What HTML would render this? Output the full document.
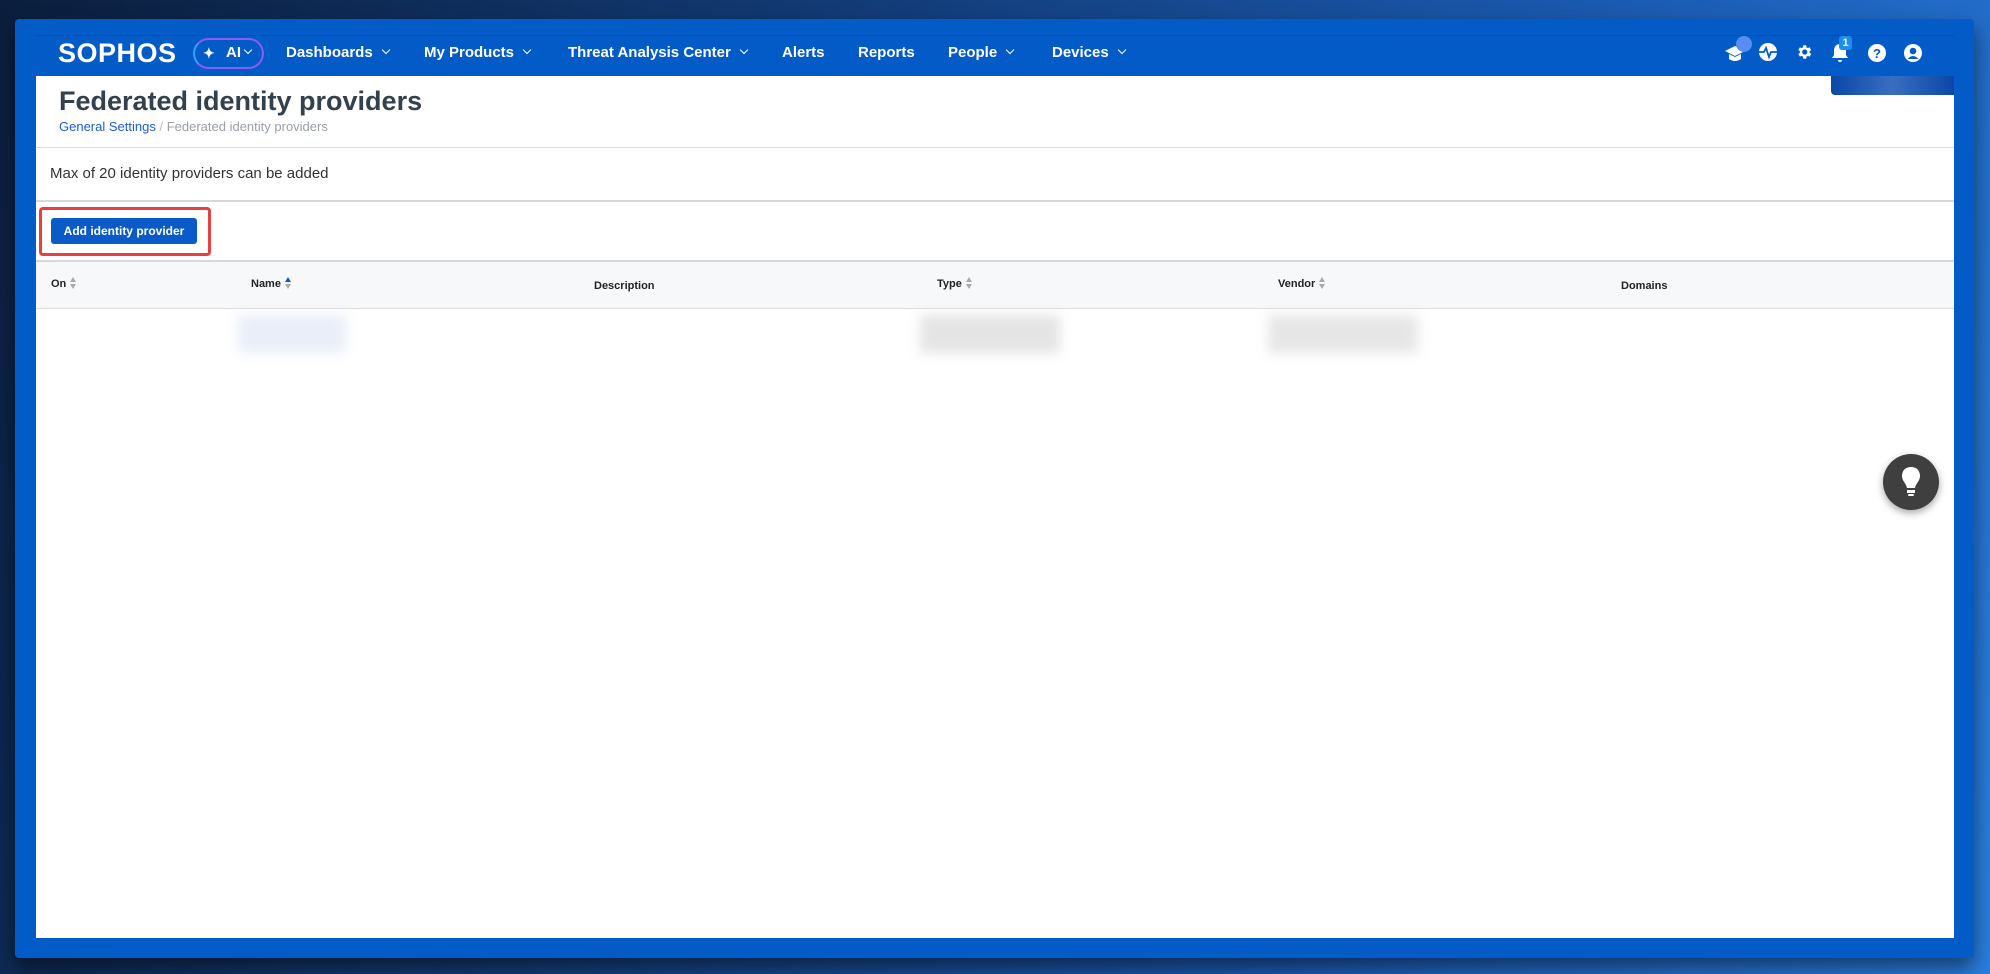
<!DOCTYPE html>
<html><head><meta charset="utf-8"><style>
*{margin:0;padding:0;box-sizing:border-box}
html,body{width:1990px;height:974px;overflow:hidden}
body{font-family:"Liberation Sans",Arial,sans-serif;background:linear-gradient(110deg,#0b1e3d 0%,#123a74 35%,#1b5bb3 70%,#2a7fe0 100%);position:relative}
.frame{position:absolute;left:15px;top:19px;width:1959px;height:939px;background:#025bc7;border-radius:4px;box-shadow:0 10px 20px rgba(0,0,0,.5)}
.nav{position:absolute;left:36px;top:35px;width:1918px;height:41px;background:#025bc7;border-top:1px solid #0a4fa8}
.nav span.i{position:absolute;top:0;line-height:34px;color:#fff;font-weight:bold;font-size:15px}
.chev{display:inline-block;width:6px;height:6px;border-right:1.6px solid #fff;border-bottom:1.6px solid #fff;transform:rotate(45deg);margin-left:10px;position:relative;top:-4px}
.white{position:absolute;left:36px;top:76px;width:1918px;height:862px;background:#fff}
.ab{position:absolute}
.th{position:absolute;top:278px;font-size:11px;font-weight:bold;color:#222}
.sort{display:inline-block;vertical-align:middle;margin-left:4px;width:7px;height:12px;position:relative;top:-1px}
.sort:before{content:"";position:absolute;left:0;top:0;border-left:3.5px solid transparent;border-right:3.5px solid transparent;border-bottom:5px solid #aaa}
.sort:after{content:"";position:absolute;left:0;bottom:0;border-left:3.5px solid transparent;border-right:3.5px solid transparent;border-top:5px solid #aaa}
.sort.up:before{border-bottom-color:#0a5bc7}
.blur{position:absolute;top:315px;height:38px;filter:blur(6px)}
</style></head><body>
<div class="frame"></div>
<div class="nav">
  <span class="i" style="left:22px;font-size:27px;letter-spacing:0.5px;font-weight:bold">SOPHOS</span>
  <div class="ab" style="left:157px;top:2px;width:71px;height:31px;border-radius:16px;border:2px solid #8a5cf0;border-left-color:#3aa0ff"></div>
  <span class="i" style="left:167px;font-size:14px">✦</span>
  <span class="i" style="left:190px;font-size:15px">AI<span class="chev" style="margin-left:4px"></span></span>
  <span class="i" style="left:250px">Dashboards<span class="chev"></span></span>
  <span class="i" style="left:388px">My Products<span class="chev"></span></span>
  <span class="i" style="left:532px">Threat Analysis Center<span class="chev"></span></span>
  <span class="i" style="left:746px">Alerts</span>
  <span class="i" style="left:822px">Reports</span>
  <span class="i" style="left:912px">People<span class="chev"></span></span>
  <span class="i" style="left:1016px">Devices<span class="chev"></span></span>
  <svg class="ab" style="left:1688px;top:7px" width="22" height="22" viewBox="0 0 22 22"><path d="M1 8 L11 3 L21 8 L11 13Z" fill="#fff"/><path d="M5 11 V16 Q11 20 17 16 V11 L11 14Z" fill="#fff"/></svg>
  <div class="ab" style="left:1700px;top:0px;width:16px;height:16px;border-radius:50%;background:#5a8cf2"></div>
  <svg class="ab" style="left:1722px;top:6px" width="20" height="20" viewBox="0 0 20 20"><circle cx="10" cy="10" r="9" fill="#fff"/><path d="M1 10 H6 L8 6 L11 15 L13 10 H19" stroke="#025bc7" stroke-width="1.8" fill="none"/></svg>
  <svg class="ab" style="left:1759px;top:7px" width="18" height="18" viewBox="0 0 24 24"><path fill="#fff" d="M19.4 13a7.5 7.5 0 000-2l2.1-1.6-2-3.5-2.5 1a7 7 0 00-1.7-1L15 3h-4l-.4 2.9a7 7 0 00-1.7 1l-2.5-1-2 3.5L6.6 11a7.5 7.5 0 000 2l-2.1 1.6 2 3.5 2.5-1a7 7 0 001.7 1L11 21h4l.4-2.9a7 7 0 001.7-1l2.5 1 2-3.5zM13 15.5a3.5 3.5 0 110-7 3.5 3.5 0 010 7z"/></svg>
  <svg class="ab" style="left:1795px;top:7px" width="18" height="20" viewBox="0 0 18 20"><path d="M9 1 C5 1 3 4 3 8 V12 L1 15 H17 L15 12 V8 C15 4 13 1 9 1Z M7 17 A2 2 0 0 0 11 17Z" fill="#fff"/></svg>
  <div class="ab" style="left:1803px;top:0px;width:13px;height:14px;border-radius:3px;background:#1e8df0;color:#fff;font-size:11px;font-weight:bold;text-align:center;line-height:14px">1</div>
  <svg class="ab" style="left:1831px;top:7px" width="20" height="20" viewBox="0 0 20 20"><circle cx="10" cy="10" r="9" fill="#fff"/><text x="10" y="15" text-anchor="middle" font-family="Liberation Sans" font-weight="bold" font-size="13" fill="#025bc7">?</text></svg>
  <svg class="ab" style="left:1867px;top:7px" width="20" height="20" viewBox="0 0 20 20"><circle cx="10" cy="10" r="9" fill="#fff"/><circle cx="10" cy="8" r="3.3" fill="#025bc7"/><path d="M4.5 16 Q10 10 15.5 16" fill="#025bc7"/></svg>
</div>
<div class="white">
  <div class="ab" style="left:1795px;top:0;width:123px;height:19px;border-radius:0 0 0 4px;background:linear-gradient(90deg,#0a47a8,#3a6ec0 50%,#0a47a8)"></div>
  <div class="ab" style="left:23px;top:10px;font-size:27px;font-weight:bold;color:#33414e">Federated identity providers</div>
  <div class="ab" style="left:23px;top:43px;font-size:13px;color:#1a5fd0">General Settings <span style="color:#bbb">/</span> <span style="color:#9aa0a6">Federated identity providers</span></div>
  <div class="ab" style="left:0;top:71px;width:1918px;height:1px;background:#dcdcdc"></div>
  <div class="ab" style="left:14px;top:89px;font-size:15px;color:#333">Max of 20 identity providers can be added</div>
  <div class="ab" style="left:0;top:124px;width:1918px;height:2px;background:#d8d8d8"></div>
  <div class="ab" style="left:3px;top:131px;width:172px;height:49px;border:3px solid #e8403f;border-radius:4px"></div>
  <div class="ab" style="left:15px;top:142px;width:146px;height:26px;border-radius:3px;background:#0a5bc7;color:#fff;font-size:12px;font-weight:bold;text-align:center;line-height:26px">Add identity provider</div>
  <div class="ab" style="left:0;top:184px;width:1918px;height:49px;background:#f7f8fa;border-top:2px solid #d8d8d8;border-bottom:1px solid #dcdcdc"></div>
</div>
<div class="th" style="left:51px">On<span class="sort"></span></div>
<div class="th" style="left:251px">Name<span class="sort up"></span></div>
<div class="th" style="left:594px;top:280px">Description</div>
<div class="th" style="left:937px">Type<span class="sort"></span></div>
<div class="th" style="left:1278px">Vendor<span class="sort"></span></div>
<div class="th" style="left:1621px;top:280px">Domains</div>
<div class="blur" style="left:238px;width:108px;background:#e9eef8"></div>
<div class="blur" style="left:920px;width:140px;background:#e4e4e4"></div>
<div class="blur" style="left:1268px;width:150px;background:#e6e6e6"></div>
<div class="ab" style="left:1883px;top:454px;width:56px;height:56px;border-radius:50%;background:#3f3f3f;box-shadow:0 3px 8px rgba(0,0,0,.35)"></div>
<svg class="ab" style="left:1898px;top:465px" width="26" height="34" viewBox="0 0 26 34"><path d="M13 2 C7 2 4 6 4 11 C4 16 8 18 9 23 H17 C18 18 22 16 22 11 C22 6 19 2 13 2Z" fill="#fff"/><rect x="9" y="25" width="8" height="3" fill="#fff"/><rect x="10" y="29" width="6" height="2" rx="1" fill="#fff"/></svg>
</body></html>
